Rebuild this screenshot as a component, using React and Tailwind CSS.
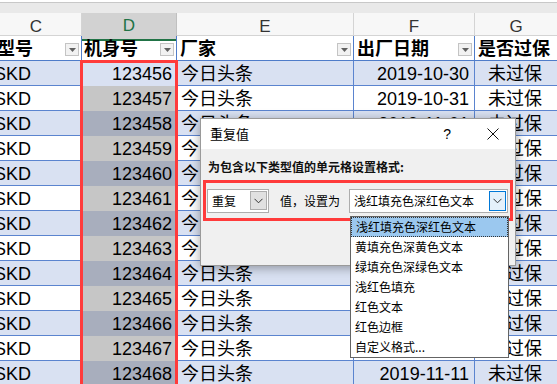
import React from 'react';

const dates = [
  '2019-10-30', '2019-10-31', '2019-11-01', '2019-11-02', '2019-11-03',
  '2019-11-04', '2019-11-05', '2019-11-06', '2019-11-07', '2019-11-08',
  '2019-11-09', '2019-11-10', '2019-11-11',
];

const rows = dates.map((date, i) => ({ id: 123456 + i, date }));

const options = [
  '浅红填充色深红色文本',
  '黄填充色深黄色文本',
  '绿填充色深绿色文本',
  '浅红色填充',
  '红色文本',
  '红色边框',
  '自定义格式...',
];

const cols = 'grid grid-cols-[82px_95px_177px_121px_82px]';

const FilterButton = () => (
  <div className="ml-auto mr-[2px] flex h-[13px] w-[14px] items-center justify-center border border-[#c4c4c4] bg-[#f2f2f2]">
    <svg width="7" height="4" viewBox="0 0 7 4">
      <path d="M0 0 L7 0 L3.5 4 Z" fill="#606060" />
    </svg>
  </div>
);

const Chevron = () => (
  <svg width="9" height="6" viewBox="0 0 9 6">
    <path d="M0.5 0.8 L4.5 4.8 L8.5 0.8" fill="none" stroke="#333" strokeWidth="1" />
  </svg>
);

const DuplicateDialog = () => (
  <div className="absolute left-[200px] top-[118px] h-[148px] w-[316px] border border-[#9a9a9a] bg-[#f0f0f0] shadow-[0_2px_10px_rgba(0,0,0,0.35)] [font-family:'Noto_Sans_CJK_SC',sans-serif]">
    <div className="flex h-[30px] items-center bg-white pl-[9px] text-[13px] text-black">
      <span>重复值</span>
      <span className="ml-auto mr-[36px] text-[14px] [font-family:'Liberation_Sans',sans-serif]">?</span>
      <svg width="12" height="12" viewBox="0 0 12 12" className="mr-[16px]">
        <path d="M0.5 0.5 L11.5 11.5 M11.5 0.5 L0.5 11.5" stroke="#111" strokeWidth="1" />
      </svg>
    </div>
    <div className="px-[7px] pt-[9px] text-[12px] font-bold leading-[18px] text-[#111]">
      为包含以下类型值的单元格设置格式:
    </div>
    <div className="mx-[2px] mt-[4px] flex h-[41px] items-center border-[3px] border-[#ff3b3b] pl-[1px] pr-[2px] text-[12px] text-black">
      <div className="flex h-[24px] w-[62px] items-center border border-[#adadad] bg-white pl-[4px]">
        <span>重复</span>
        <div className="ml-auto mr-[1px] flex h-[19px] w-[17px] items-center justify-center border border-[#adadad] bg-[#e1e1e1]">
          <Chevron />
        </div>
      </div>
      <span className="ml-[11px]">值，设置为</span>
      <div className="ml-auto flex h-[24px] w-[159px] items-center border border-[#adadad] bg-white pl-[4px]">
        <span>浅红填充色深红色文本</span>
        <div className="ml-auto mr-[1px] flex h-[20px] w-[17px] items-center justify-center border border-[#0078d7] bg-[#e5f1fb]">
          <Chevron />
        </div>
      </div>
    </div>
  </div>
);

const OptionList = () => (
  <div className="absolute left-[350px] top-[216px] w-[159px] border border-[#646464] bg-white text-[12px] text-black [font-family:'Noto_Sans_CJK_SC',sans-serif]">
    {options.map((opt, i) => (
      <div
        key={opt}
        className={`flex h-[20px] items-center pl-[4px] ${i === 0 ? 'border border-dotted border-[#333] bg-[#9bc8ef] pl-[3px]' : ''}`}
      >
        {opt}
      </div>
    ))}
  </div>
);

export default function App() {
  return (
    <div className="relative h-[384px] w-[557px] overflow-hidden bg-white text-black [font-family:'Liberation_Sans','Noto_Sans_CJK_SC',sans-serif]">
      {/* formula bar edge */}
      <div className="h-[3px] border-b border-[#c8c8c8] bg-white" />
      <div className="h-[10px] bg-[#e9e9e9]" />

      {/* column letters */}
      <div className={`${cols} h-[23px] border-b border-[#d4d4d4] bg-[#f7f7f7] text-[17px] text-[#333]`}>
        <div className="flex items-center justify-center border-r border-[#d4d4d4] pr-[9px]">C</div>
        <div className="flex items-center justify-center border-b-2 border-r border-b-[#217346] border-r-[#c0c0c0] bg-[#d2d2d2] text-[#217346]">D</div>
        <div className="flex items-center justify-center border-r border-[#d4d4d4]">E</div>
        <div className="flex items-center justify-center border-r border-[#d4d4d4]">F</div>
        <div className="flex items-center justify-center">G</div>
      </div>

      {/* table header */}
      <div className={`${cols} h-[25px] border-b border-[#4f7cc9] bg-white text-[18px] font-bold`}>
        <div className="flex items-center overflow-hidden border-r border-[#4f7cc9]">
          <span className="-ml-[3px] whitespace-nowrap">型号</span>
          <FilterButton />
        </div>
        <div className="flex items-center border-r border-[#4f7cc9] pl-[2px]">
          <span>机身号</span>
          <FilterButton />
        </div>
        <div className="flex items-center border-r border-[#4f7cc9] pl-[3px]">
          <span>厂家</span>
          <FilterButton />
        </div>
        <div className="flex items-center border-r border-[#4f7cc9] pl-[3px]">
          <span>出厂日期</span>
          <FilterButton />
        </div>
        <div className="flex items-center overflow-hidden pl-[3px]">
          <span className="whitespace-nowrap">是否过保</span>
        </div>
      </div>

      {/* data rows */}
      {rows.map((row, i) => {
        const band = i % 2 === 0;
        const dBg = i === 0 ? 'bg-[#d9e1f2]' : band ? 'bg-[#a8aebd]' : 'bg-[#c6c6c6]';
        return (
          <div
            key={row.id}
            className={`${cols} h-[25px] border-b border-[#5b84cf] text-[18px] ${band ? 'bg-[#d9e1f2]' : 'bg-white'}`}
          >
            <div className="flex items-center overflow-hidden border-r border-[#5b84cf]">
              <span className="-ml-[6px]">SKD</span>
            </div>
            <div className={`flex items-center justify-end border-r border-[#5b84cf] pr-[4px] ${dBg}`}>{row.id}</div>
            <div className="flex items-center border-r border-[#5b84cf] pl-[4px]">今日头条</div>
            <div className="flex items-center justify-end border-r border-[#5b84cf] pr-[5px]">{row.date}</div>
            <div className="flex items-center pl-[13px]">未过保</div>
          </div>
        );
      })}

      {/* highlight box around column D */}
      <div className="absolute left-[80px] top-[60px] h-[340px] w-[98px] border-[3px] border-[#ff3b3b]" />

      <DuplicateDialog />
      <OptionList />
    </div>
  );
}
